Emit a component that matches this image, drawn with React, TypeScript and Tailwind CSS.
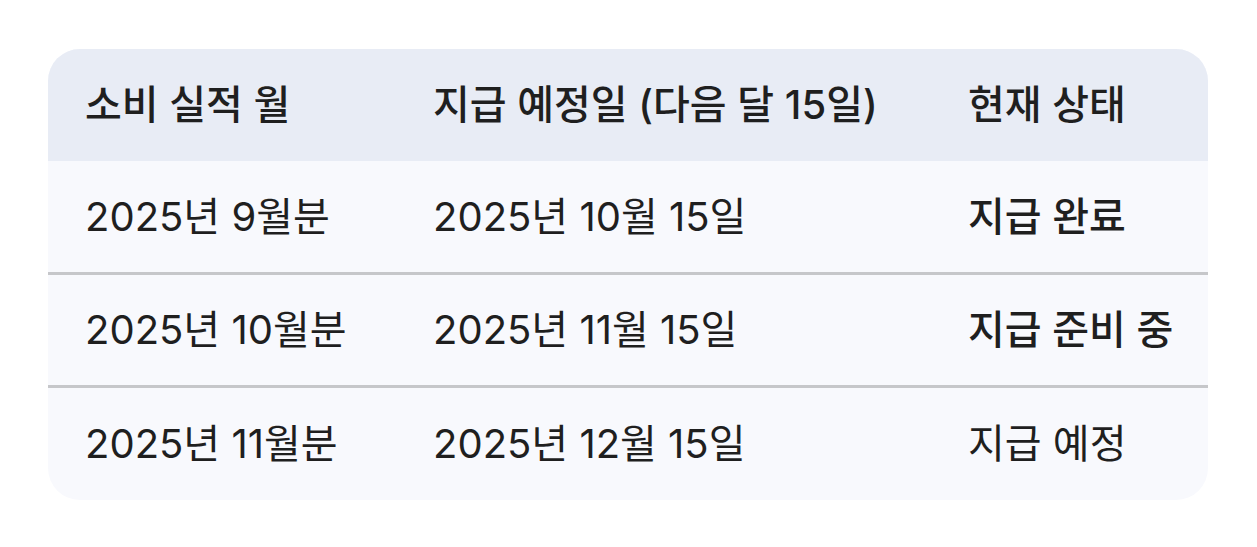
const rows = [
  { month: "2025년 9월분", date: "2025년 10월 15일", status: "지급 완료", strong: true, h: "h-[111px]" },
  { month: "2025년 10월분", date: "2025년 11월 15일", status: "지급 준비 중", strong: true, h: "h-[113px]" },
  { month: "2025년 11월분", date: "2025년 12월 15일", status: "지급 예정", strong: false, h: "h-[115px]" },
];

const cols = "grid grid-cols-[385px_535px_1fr]";

export default function App() {
  return (
    <div
      className="min-h-screen bg-white pl-[48px] pr-[49px] pt-[49px] text-[#1f1f1f]"
      style={{ fontFamily: 'Inter, "Noto Sans CJK KR", sans-serif' }}
    >
      <div className="w-[1160px] overflow-hidden rounded-[32px] bg-[#f8f9fd]">
        <div className={`${cols} h-[112px] items-center bg-[#e8ecf5] text-[40px] font-medium`}>
          <div className="pl-[37px]">소비 실적 월</div>
          <div>지급 예정일 (다음 달 15일)</div>
          <div>현재 상태</div>
        </div>
        {rows.map((r, i) => (
          <div
            key={r.month}
            className={`${cols} ${r.h} items-center text-[40px] ${i > 0 ? "border-t-[3px] border-[#c6c7ca]" : ""}`}
          >
            <div className="pl-[37px]">{r.month}</div>
            <div>{r.date}</div>
            <div className={r.strong ? "font-medium" : "font-normal"}>{r.status}</div>
          </div>
        ))}
      </div>
    </div>
  );
}
